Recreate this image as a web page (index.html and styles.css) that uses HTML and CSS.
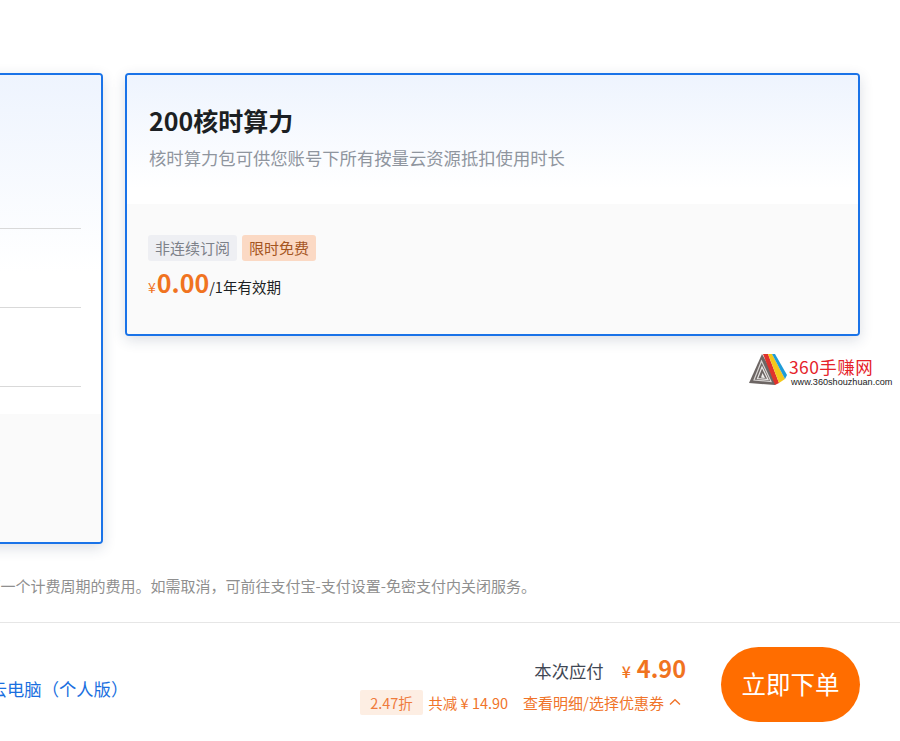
FILE: index.html
```html
<!DOCTYPE html>
<html lang="zh-CN">
<head>
<meta charset="utf-8">
<title>确认订单</title>
<link rel="stylesheet" href="styles.css">
</head>
<body>
<div class="page">
  <main class="main">
    <section class="cards">
      <article class="card card-tall">
        <div class="card-head card-head-tall">
          <div class="rule rule-1"></div>
          <div class="rule rule-2"></div>
          <div class="rule rule-3"></div>
        </div>
        <div class="card-foot card-foot-tall"></div>
      </article>
      <article class="card">
        <div class="card-head">
          <h2 class="card-title">200核时算力</h2>
          <p class="card-desc">核时算力包可供您账号下所有按量云资源抵扣使用时长</p>
        </div>
        <div class="card-foot">
          <div class="tags">
            <span class="tag tag-grey">非连续订阅</span>
            <span class="tag tag-orange">限时免费</span>
          </div>
          <div class="price-line">
            <span class="price-cur">¥</span><span class="price-num">0.00</span><span class="price-unit">/1年有效期</span>
          </div>
        </div>
      </article>
    </section>
    <div class="note-row"><p class="note">下一个计费周期的费用。如需取消，可前往支付宝-支付设置-免密支付内关闭服务。</p></div>
  </main>
  <footer class="bar">
    <a class="product-link">无影云电脑（个人版）</a>
    <div class="bar-right">
      <div class="summary">
        <div class="pay-line">
          <span class="pay-label">本次应付</span>
          <span class="pay-cur">¥</span>
          <span class="pay-num">4.90</span>
        </div>
        <div class="discount-line">
          <span class="discount-badge">2.47折</span>
          <span class="discount-save">共减 ¥ 14.90</span>
          <span class="discount-detail">查看明细/选择优惠券</span>
          <svg class="chev" width="12" height="8" viewBox="0 0 12 8"><path d="M1 6.500 6 1.800l5 4.700" fill="none" stroke="#f0742a" stroke-width="1.400"/></svg>
        </div>
      </div>
      <button class="order-btn">立即下单</button>
    </div>
  </footer>
  <div class="watermark">
    <svg class="wm-icon" width="38" height="34" viewBox="0 0 38 34">
      <path d="M13 1 0 30l26 2 2-4z" fill="#6d6664"/>
      <path d="M12.500 8 5 27l17 1.500z" fill="none" stroke="#d8d5d3" stroke-width="1.200"/>
      <path d="M13 14 8.500 25.500 19 26.500z" fill="none" stroke="#e8e6e4" stroke-width="1.200"/>
      <path d="M13.500 20 12 24.500l4 .5z" fill="#efeeed"/>
      <path d="M14 1h5l11 29-4 2z" fill="#e0322c"/>
      <path d="M19 1h4l13 25-6 4z" fill="#f3c81b"/>
      <path d="M23 1h3l12 21-2 4z" fill="#1e9cd8"/>
    </svg>
    <div class="wm-text">
      <div class="wm-name">360手赚网</div>
      <div class="wm-url">www.360shouzhuan.com</div>
    </div>
  </div>
</div>
</body>
</html>
```

FILE: styles.css
```css
* { box-sizing: border-box; }
html, body { margin: 0; padding: 0; background: #fff; }
body { font-family: "Noto Sans CJK SC", "Noto Sans", sans-serif; color: #1f2329; }
.page { position: relative; width: 900px; height: 741px; overflow: hidden; background: #fff; }

.main { height: 622px; padding-top: 73px; }
.cards { display: flex; align-items: flex-start; gap: 22px; margin-left: -632px; height: 471px; }
.card {
  flex: 0 0 735px; width: 735px; height: 263px;
  border: 2px solid #1a73e8; border-radius: 4px; overflow: hidden;
  background: #fafafa; box-shadow: 0 4px 14px rgba(30, 50, 90, .16);
  display: flex; flex-direction: column;
}
.card-tall { height: 471px; }
.card-head {
  height: 129px; padding: 28px 22px 0;
  background: linear-gradient(180deg, #eef4fe 0%, #ffffff 88%);
}
.card-head-tall { height: 339px; padding: 153px 20px 0 0; display: flex; flex-direction: column; background: linear-gradient(180deg, #eef4fe 0%, #ffffff 58%); }
.rule { height: 1px; background: #d9d9d9; flex: none; }
.rule-2 { margin-top: 78px; }
.rule-3 { margin-top: 78px; }
.card-foot { flex: 1; padding: 31px 21px 0; background: #fafafa; }
.card-foot-tall { padding: 0; }
.card-title { margin: 0; font-size: 25px; line-height: 34px; font-weight: 700; color: #1c1f23; }
.card-desc { margin: 9px 0 0; font-size: 17.330px; line-height: 24px; font-weight: 400; color: #8f959e; }
.tags { display: flex; gap: 5px; }
.tag { height: 26px; padding: 0 7px; border-radius: 3px; font-size: 15px; line-height: 26px; }
.tag-grey { background: #eeeff3; color: #7d8189; }
.tag-orange { background: #fbd9c4; color: #a5551f; }
.price-line { display: flex; align-items: baseline; margin-top: 2px; height: 38px; line-height: 38px; }
.price-cur { font-size: 14px; color: #f0731f; margin-right: 1px; }
.price-num { font-size: 25px; font-weight: 700; color: #f0731f; }
.price-unit { font-size: 14.500px; color: #1c1f23; margin-left: 0; }
.note-row { display: flex; justify-content: flex-end; padding-right: 364px; margin-top: 32px; }
.note { margin: 0; flex: none; font-size: 15px; line-height: 20px; color: #8f8f8f; white-space: nowrap; }

.bar {
  height: 119px; border-top: 1px solid #e6e6e6;
  display: flex; align-items: flex-start; justify-content: space-between;
  padding: 24px 40px 0 0; background: #fff;
}
.product-link { margin: 30px 0 0 -45px; font-size: 17.330px; line-height: 24px; color: #1a6fe0; white-space: nowrap; }
.bar-right { display: flex; align-items: flex-start; gap: 35px; }
.summary { display: flex; flex-direction: column; align-items: flex-end; }
.pay-line { display: flex; align-items: baseline; height: 42px; line-height: 42px; }
.pay-label { font-size: 17.330px; color: #3f4754; }
.pay-cur { font-size: 16px; color: #f0731f; margin-left: 18px; font-weight: 500; }
.pay-num { font-size: 23.500px; font-weight: 700; color: #f0731f; margin-left: 6px; }
.discount-line { display: flex; align-items: center; height: 26px; font-size: 14px; color: #f0742a; }
.discount-badge { background: #fdeee3; color: #ef7b3c; height: 25px; line-height: 25px; padding: 0 10.500px; border-radius: 2px; font-size: 14.500px; }
.discount-save { margin-left: 5px; font-size: 14.500px; }
.discount-detail { margin-left: 15px; font-size: 15px; }
.chev { margin-left: 5px; margin-right: 5px; }
.order-btn {
  width: 139px; height: 75px; border: 0; border-radius: 38px;
  background: #ff6d00; color: #fff; font: 400 24.500px/1 "Noto Sans CJK SC", sans-serif;
}

.watermark { position: absolute; left: 749px; top: 353px; display: flex; align-items: flex-start; gap: 2px; }
.wm-icon { flex: none; }
.wm-text { padding-top: 4px; }
.wm-name { font-size: 17.500px; line-height: 20px; height: 20px; color: #e5232a; letter-spacing: .4px; }
.wm-url { font-family: "Liberation Sans", sans-serif; font-size: 9.150px; line-height: 10px; font-weight: 400; color: #222; white-space: nowrap; margin-left: 2px; }
```
